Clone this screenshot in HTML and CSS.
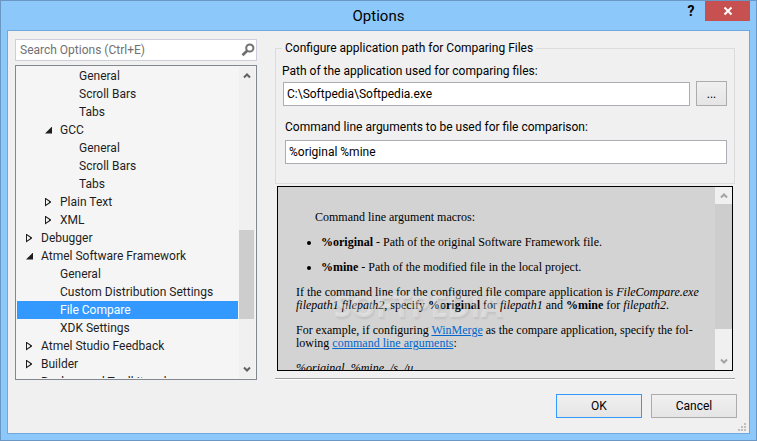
FILE: index.html
```html
<!DOCTYPE html>
<html lang="en">
<head>
    <meta charset="UTF-8">
    <meta name="viewport" content="width=device-width, initial-scale=1.0">
    <title>Options</title>
    <link rel="stylesheet" href="styles.css">
</head>
<body>
    <div class="window">
        <header class="titlebar">
            <h1>Options</h1>
            <div class="window-buttons">
                <button type="button" class="help-btn" aria-label="Help">?</button>
                <button type="button" class="close-btn" aria-label="Close">
                    <svg width="10" height="10" viewBox="0 0 10 10"><path d="M1.5 1.5l7 7M8.5 1.5l-7 7" stroke="#fff" stroke-width="2"/></svg>
                </button>
            </div>
        </header>

        <form class="client">
            <div class="columns">
                <aside class="sidebar">
                    <div class="search">
                        <input type="text" placeholder="Search Options (Ctrl+E)" aria-label="Search Options">
                        <svg width="14" height="14" viewBox="0 0 14 14"><circle cx="8.8" cy="5" r="3.6" fill="none" stroke="#717171" stroke-width="2"/><path d="M6.4 7.4L1.5 12.3" stroke="#717171" stroke-width="2.8"/></svg>
                    </div>

                    <div class="tree-box">
                        <ul class="tree">
                            <li class="level-3">General</li>
                            <li class="level-3">Scroll Bars</li>
                            <li class="level-3">Tabs</li>
                            <li class="level-2 open">GCC</li>
                            <li class="level-3">General</li>
                            <li class="level-3">Scroll Bars</li>
                            <li class="level-3">Tabs</li>
                            <li class="level-2 closed">Plain Text</li>
                            <li class="level-2 closed">XML</li>
                            <li class="level-1 closed">Debugger</li>
                            <li class="level-1 open">Atmel Software Framework</li>
                            <li class="level-2">General</li>
                            <li class="level-2">Custom Distribution Settings</li>
                            <li class="level-2 selected">File Compare</li>
                            <li class="level-2">XDK Settings</li>
                            <li class="level-1 closed">Atmel Studio Feedback</li>
                            <li class="level-1 closed">Builder</li>
                            <li class="level-1">Background Toolkit and</li>
                        </ul>
                        <div class="scrollbar">
                            <svg class="arrow" width="8" height="7" viewBox="0 0 8 7"><path d="M1 5.5l3-3 3 3" fill="none" stroke="#606060" stroke-width="2"/></svg>
                            <div class="track"><div class="thumb"></div></div>
                            <svg class="arrow" width="8" height="7" viewBox="0 0 8 7"><path d="M1 1.5l3 3 3-3" fill="none" stroke="#606060" stroke-width="2"/></svg>
                        </div>
                    </div>
                </aside>

                <main class="page">
                    <fieldset class="group">
                        <legend>Configure application path for Comparing Files</legend>
                        <label for="appPath">Path of the application used for comparing files:</label>
                        <div class="path-row">
                            <input type="text" id="appPath" value="C:\Softpedia\Softpedia.exe">
                            <button type="button" class="browse-btn">...</button>
                        </div>
                        <div class="args">
                            <label for="appArgs">Command line arguments to be used for file comparison:</label>
                            <input type="text" id="appArgs" value="%original %mine">
                        </div>
                    </fieldset>

                    <div class="help">
                        <div class="help-text">
                            <p class="intro">Command line argument macros:</p>
                            <ul>
                                <li><b>%original</b> - Path of the original Software Framework file.</li>
                                <li><b>%mine</b> - Path of the modified file in the local project.</li>
                            </ul>
                            <p>If the command line for the configured file compare application is <i>FileCompare.exe filepath1 filepath2</i>, specify <b>%original</b> for <i>filepath1</i> and <b>%mine</b> for <i>filepath2</i>.</p>
                            <p>For example, if configuring <a href="#">WinMerge</a> as the compare application, specify the fol&shy;lowing <a href="#">command line arguments</a>:</p>
                            <p><i>%original&nbsp; %mine&nbsp; /s&nbsp; /u</i></p>
                        </div>
                        <div class="scrollbar">
                            <svg class="arrow" width="8" height="7" viewBox="0 0 8 7"><path d="M1 5.5l3-3 3 3" fill="none" stroke="#a3a3a3" stroke-width="2"/></svg>
                            <div class="track"><div class="thumb"></div></div>
                            <svg class="arrow" width="8" height="7" viewBox="0 0 8 7"><path d="M1 1.5l3 3 3-3" fill="none" stroke="#a3a3a3" stroke-width="2"/></svg>
                        </div>
                        <div class="watermark">SOFTPEDIA<sup>®</sup></div>
                    </div>
                    <hr>
                </main>
            </div>

            <footer class="buttons">
                <button type="submit" class="default">OK</button>
                <button type="button">Cancel</button>
            </footer>
            <svg class="grip" width="8" height="8" viewBox="0 0 8 8" fill="#bfbfbf"><path d="M6 0h2v2H6zM3 3h2v2H3zM6 3h2v2H6zM0 6h2v2H0zM3 6h2v2H3zM6 6h2v2H6z"/></svg>
        </form>
    </div>
</body>
</html>
```

FILE: styles.css
```css
* {
    margin: 0;
    padding: 0;
    box-sizing: border-box;
}

body {
    font-family: Roboto, "Open Sans", sans-serif;
    font-size: 12px;
    line-height: 18px;
    color: #000;
}

button,
input {
    font: inherit;
    color: inherit;
}

.window {
    display: flex;
    flex-direction: column;
    height: 100vh;
    padding: 0 6px 6px;
    border: 1px solid #6a97c4;
    background: #8cc8fa;
}

/* title bar */
.titlebar {
    display: grid;
    grid-template-columns: 1fr auto 1fr;
    height: 29px;
}

.titlebar h1 {
    grid-column: 2;
    font-size: 15px;
    font-weight: 400;
    line-height: 30px;
}

.window-buttons {
    display: flex;
    justify-content: flex-end;
    align-items: flex-start;
}

.help-btn {
    width: 28px;
    height: 20px;
    border: none;
    background: none;
    font-size: 14px;
    font-weight: 700;
}

.close-btn {
    display: flex;
    align-items: center;
    justify-content: center;
    width: 45px;
    height: 20px;
    border: none;
    background: #c75050;
}

/* client area */
.client {
    position: relative;
    flex: 1;
    min-height: 0;
    display: flex;
    flex-direction: column;
    padding: 8px 12px 15px 7px;
    border: 1px solid #6fa8dc;
    background: #f0f0f0;
}

.columns {
    flex: 1;
    min-height: 0;
    display: flex;
    gap: 18px;
}

.sidebar {
    flex: 0 0 242px;
    display: flex;
    flex-direction: column;
    gap: 4px;
}

.search {
    display: flex;
    align-items: center;
    height: 22px;
    padding-right: 1px;
    border: 1px solid #cccedb;
    background: #fff;
}

.search input {
    flex: 1;
    min-width: 0;
    padding: 0 4px;
    border: none;
    background: none;
}

.search input::placeholder {
    color: #717171;
    opacity: 1;
}

.tree-box {
    flex: 1;
    min-height: 0;
    display: flex;
    gap: 1px;
    padding: 1px;
    border: 1px solid #828790;
    background: #f5f5f5;
}

.tree {
    flex: 1;
    overflow: hidden;
    list-style: none;
    color: #1e1e1e;
}

.tree li {
    display: flex;
    align-items: center;
    height: 18px;
    white-space: nowrap;
}

.tree li::before {
    content: "";
    width: 7px;
    height: 9px;
    margin-right: 8px;
}

.level-1 {
    padding-left: 9px;
}

.level-2 {
    padding-left: 28px;
}

.level-3 {
    padding-left: 47px;
}

.tree .closed::before {
    background: #1e1e1e;
    clip-path: polygon(evenodd, 0 0, 6px 4px, 6px 5px, 0 9px, 0 0, 1px 2px, 1px 7px, 4px 5px, 4px 4px, 1px 2px);
}

.tree .open::before {
    height: 7px;
    background: #1e1e1e;
    clip-path: polygon(100% 0, 100% 100%, 0 100%);
}

.tree .selected {
    background: #3399ff;
    color: #fff;
}

/* scroll bars */
.scrollbar {
    flex: none;
    display: flex;
    flex-direction: column;
    align-items: center;
    width: 17px;
    background: #f0f0f0;
}

.tree-box .scrollbar {
    width: 16px;
}

.scrollbar .arrow {
    flex: none;
    height: 17px;
}

.track {
    flex: 1;
    align-self: stretch;
    display: flex;
    flex-direction: column;
}

.thumb {
    background: #cdcdcd;
}

.tree-box .thumb {
    height: 32%;
    width: 15px;
    margin: auto 0 42px;
}

/* options page */
.page {
    flex: 1;
    min-width: 0;
    display: flex;
    flex-direction: column;
    padding-right: 2px;
}

.group {
    min-width: 0;
    height: 145px;
    padding: 5px 7px 0 6px;
    border: 1px solid #dcdcdc;
}

.group legend {
    padding: 0 3px;
}

.group label {
    display: block;
}

.group input {
    width: 100%;
    height: 24px;
    padding: 0 3px;
    border: 1px solid #abadb3;
    background: #fff;
}

.path-row {
    display: flex;
    align-items: center;
    gap: 6px;
    margin-top: 1px;
    padding-left: 1px;
}

.browse-btn {
    flex: 0 0 31px;
    height: 25px;
}

.args {
    padding: 12px 0 0 3px;
}

.args input {
    margin-top: 4px;
}

.browse-btn,
.buttons button {
    border: 1px solid #acacac;
    background: linear-gradient(#f0f0f0, #e5e5e5);
}

.help {
    position: relative;
    flex: 1;
    min-height: 0;
    display: flex;
    margin: 2px 2px 0;
    border: 1px solid #000;
    background: #d3d3d3;
    font-family: "Liberation Serif", serif;
    font-size: 12px;
    line-height: 13px;
}

.help-text {
    flex: 1;
    overflow: hidden;
    padding: 24px 6px 0 18px;
}

.help-text p,
.help-text li {
    margin-bottom: 12px;
}

.help-text .intro {
    padding-left: 19px;
}

.help-text ul {
    padding-left: 25px;
}

.help-text a {
    color: #0066cc;
}

.help .track {
    display: block;
}

.help .thumb {
    height: 84%;
}

.watermark {
    position: absolute;
    left: 56px;
    top: 103px;
    font: 700 31px/31px "Open Sans", sans-serif;
    color: rgba(255, 255, 255, 0.35);
    text-shadow: 1px 2px 2px rgba(0, 0, 0, 0.08);
    pointer-events: none;
}

.watermark sup {
    font-size: 8px;
    line-height: 8px;
}

hr {
    margin-top: 7px;
    border: none;
    border-top: 1px solid #a0a0a0;
    border-bottom: 1px solid #fff;
}

.buttons {
    display: flex;
    justify-content: flex-end;
    gap: 9px;
    margin-top: 14px;
}

.buttons button {
    width: 86px;
    height: 24px;
}

.buttons .default {
    border-color: #3399ff;
}

.grip {
    position: absolute;
    right: 3px;
    bottom: 2px;
}
```
